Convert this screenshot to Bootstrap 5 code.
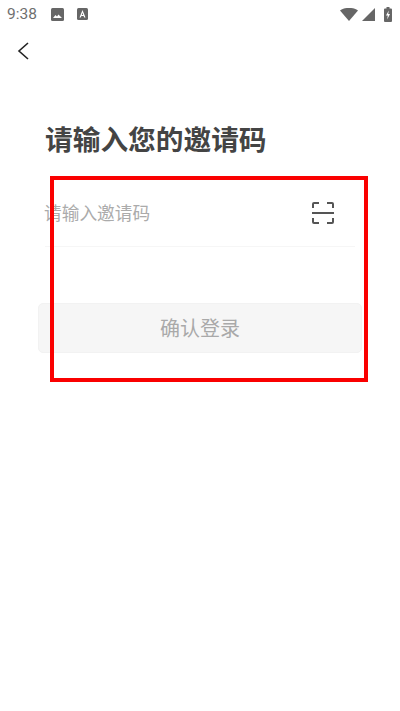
<!DOCTYPE html>
<html lang="zh-CN">
<head>
  <meta charset="UTF-8">
  <title>邀请码</title>
  <meta name="viewport" content="width=device-width, initial-scale=1">
  <link href="https://cdn.jsdelivr.net/npm/bootstrap@5.3.3/dist/css/bootstrap.min.css" rel="stylesheet">
  <style>
    body {
      font-family: "Noto Sans CJK SC", "Roboto", sans-serif;
      background: #fff;
      width: 400px;
      height: 711px;
      overflow: hidden;
      position: relative;
    }
    .status-bar {
      height: 28px;
      padding: 0 8px 0 7px;
      color: #6f6f6f;
    }
    .status-time {
      font-family: "Roboto", sans-serif;
      font-size: 15.5px;
      line-height: 28px;
      width: 44px;
    }
    .status-a { margin-left: 13px; }
    .status-batt { margin-left: 5px; }
    .back-row { height: 45px; padding-left: 16px; }
    .invite-title {
      font-size: 27.7px;
      font-weight: 700;
      line-height: 36px;
      color: #444;
      margin: 47px 0 0 45px;
    }
    .invite-field {
      height: 72px;
      margin: 19px 45px 0;
      border-bottom: 1px solid #f6f6f6;
      padding-top: 3px;
    }
    .invite-hint { font-size: 17.7px; color: #ababab; margin-left: -1px; }
    .scan-icon { margin: 1px 20px 0 0; }
    .confirm-btn {
      display: block;
      width: 324px;
      height: 50px;
      margin: 56px 0 0 38px;
      padding: 0;
      font-size: 20px;
      color: #a9a9a9;
      background: #f6f6f6;
      border: 1px solid #f2f2f2;
      border-radius: 5px;
    }
    .red-frame {
      position: absolute;
      left: 50px;
      top: 176px;
      width: 318px;
      height: 206px;
      border: 4px solid #fa0000;
      pointer-events: none;
    }
  </style>
</head>
<body>

<!-- status bar -->
<div class="status-bar d-flex align-items-center">
  <span class="status-time">9:38</span>
  <svg width="13" height="13" viewBox="0 0 13 13"><rect width="13" height="13" rx="1.5" fill="#666"/><path d="M2 10l2.500-3 1.500 1.500 1.500-2L11 10z" fill="#fff"/></svg>
  <svg class="status-a" width="11" height="12" viewBox="0 0 11 12"><rect width="11" height="12" rx="1.500" fill="#666"/><path d="M5.500 2L8.500 9.500H7.200L6.600 8H4.400L3.800 9.500H2.500zM4.800 7h1.400L5.500 4.800z" fill="#fff"/></svg>
  <div class="ms-auto d-flex align-items-center gap-1">
    <svg width="18" height="13" viewBox="0 0 18 13"><path d="M0 2.500C5-1 13-1 18 2.500L9 13z" fill="#666"/></svg>
    <svg width="13" height="13" viewBox="0 0 13 13"><path d="M13 0v13H0z" fill="#666"/></svg>
    <svg class="status-batt" width="8" height="15" viewBox="0 0 8 15"><path d="M2.500 0h3v1.500H7a1 1 0 0 1 1 1V14a1 1 0 0 1-1 1H1a1 1 0 0 1-1-1V2.500a1 1 0 0 1 1-1h1.500z" fill="#666"/><path d="M4.800 3.500L2 8.500h1.800L3.200 12.500 6 7H4.200z" fill="#fff"/></svg>
  </div>
</div>

<!-- back -->
<div class="back-row d-flex align-items-center">
  <svg width="14" height="20" viewBox="0 0 14 20"><path d="M12 2L3 10l9 8" fill="none" stroke="#222" stroke-width="1.600"/></svg>
</div>

<h1 class="invite-title">请输入您的邀请码</h1>

<div class="invite-field d-flex align-items-center justify-content-between">
  <span class="invite-hint">请输入邀请码</span>
  <svg class="scan-icon" width="24" height="24" viewBox="0 0 24 24" fill="none" stroke="#555" stroke-width="2">
    <path d="M2 7V3a1 1 0 0 1 1-1h5M16 2h5a1 1 0 0 1 1 1v4M2 17v4a1 1 0 0 0 1 1h5M16 22h5a1 1 0 0 0 1-1v-4M1 12h22"/>
  </svg>
</div>

<button type="button" class="btn confirm-btn">确认登录</button>

<div class="red-frame"></div>

<script src="https://cdn.jsdelivr.net/npm/bootstrap@5.3.3/dist/js/bootstrap.bundle.min.js"></script>
</body>
</html>
